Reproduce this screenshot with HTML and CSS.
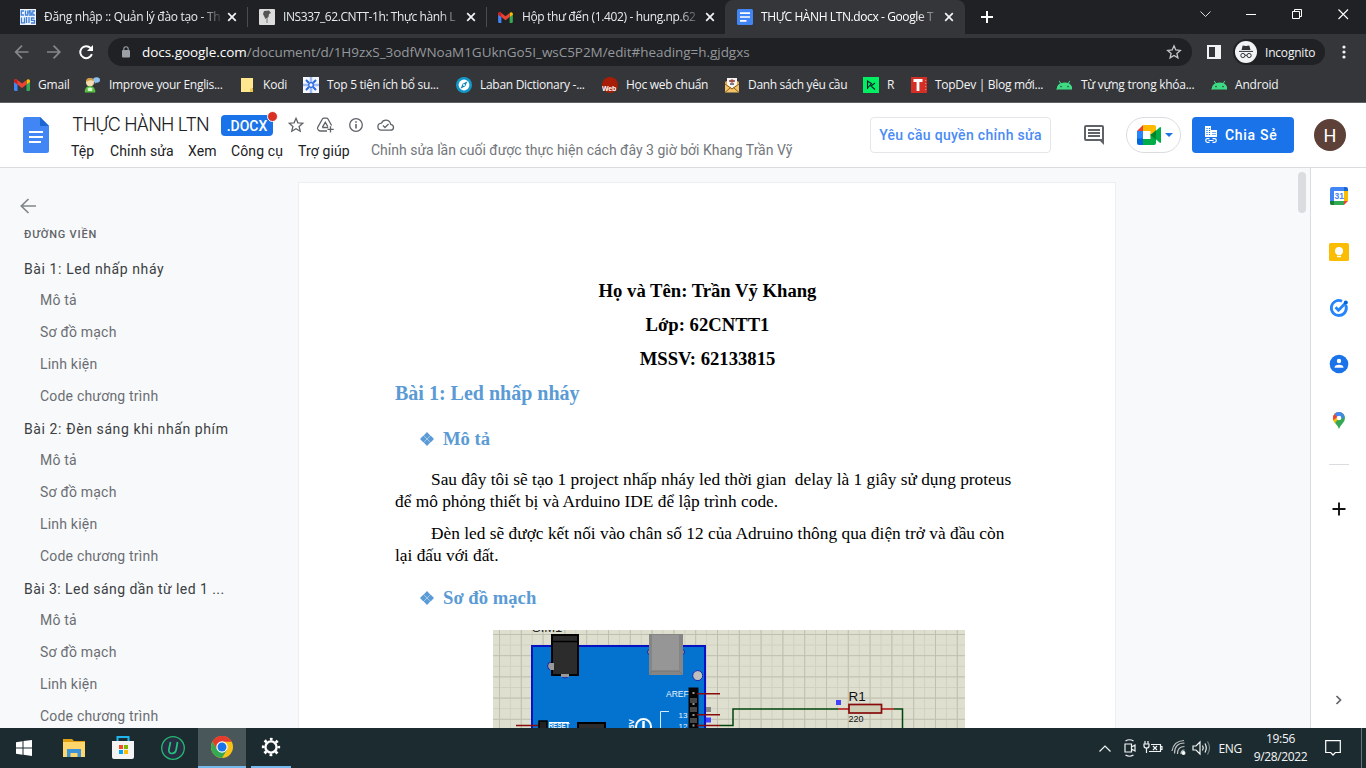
FILE: index.html
```html
<!DOCTYPE html>
<html lang="vi">
<head>
<meta charset="utf-8">
<title>THỰC HÀNH LTN.docx - Google Tài liệu</title>
<link rel="stylesheet" href="styles.css">
</head>
<body>
<svg width="0" height="0" class="defs">
  <symbol id="x" viewBox="0 0 10 10"><path d="M1.2 1.2l7.6 7.6M8.8 1.2L1.2 8.8" stroke="#f1f3f4" stroke-width="1.7"/></symbol>
  <symbol id="gmail" viewBox="0 0 16 12"><path d="M0 2v8.700Q0 12 1.200 12H3.500V5z" fill="#4285f4"/><path d="M16 2v8.700Q16 12 14.800 12H12.500V5z" fill="#34a853"/><path d="M12.500 5.500V1.200L13.300.5Q15 -.5 16 1.500V3z" fill="#fbbc04"/><path d="M0 3V1.500Q.8-.5 2.700.5L8 4.600 12.500 1.100V5.500L8 9 3.500 5.500z" fill="#ea4335"/><path d="M0 3V1.500Q.8-.5 2.700.5L3.500 1.200V5.500z" fill="#c5221f"/></symbol>
  <symbol id="android" viewBox="0 0 17 10"><path d="M1 9.500Q1.400 5.300 4.600 3.200L3.200.9M16 9.500Q15.600 5.300 12.400 3.200L13.800.9" stroke="#3ddc84" fill="none"/><path d="M.5 9.500Q1.500 2.400 8.500 2.400T16.500 9.500z" fill="#3ddc84"/><circle cx="5" cy="6.600" r=".8" fill="#35463d"/><circle cx="12" cy="6.600" r=".8" fill="#35463d"/></symbol>
  <symbol id="diamond" viewBox="0 0 14 14"><path d="M7 0l3.300 3.400L7 6.800 3.700 3.400zM3.400 3.600L6.700 7 3.400 10.400 0 7zM10.600 3.600L14 7l-3.400 3.400L7.300 7zM7 7.200l3.300 3.400L7 14l-3.300-3.400z" fill="#5b9bd5"/></symbol>
</svg>

<div class="tabstrip">
  <div class="tab">
    <svg class="fav" viewBox="0 0 16 16"><rect width="16" height="16" fill="#eef4fd"/><path d="M4 2H1.300v4H4M5.500 1.500V6H7.800V1.500M11.500 2H9.300v2h2v2H9M15 2H12.800v4H15M1.500 8.500v5.300h3V8.500M6.500 8v6M9 8v6M14.500 9h-3v2.300h3V14H11" stroke="#3f7fd8" stroke-width="1.300" fill="none"/></svg>
    <span class="tab-title t1">Đăng nhập :: Quản lý đào tạo - Th</span><svg class="close"><use href="#x"/></svg>
  </div>
  <div class="tab sep">
    <svg class="fav" viewBox="0 0 16 16"><rect width="16" height="16" rx="1" fill="#dcdcdc"/><path d="M4 5l1-3 5-.5 2 2.500-2 1-.5 3-3 2-1.500-3z" fill="#555"/><path d="M7 9l2 0v5H7z" fill="#a9a9a9"/></svg>
    <span class="tab-title t2">INS337_62.CNTT-1h: Thực hành L</span><svg class="close"><use href="#x"/></svg>
  </div>
  <div class="tab sep">
    <svg class="fav mail"><use href="#gmail"/></svg>
    <span class="tab-title t3">Hộp thư đến (1.402) - hung.np.62</span><svg class="close"><use href="#x"/></svg>
  </div>
  <div class="tab active">
    <svg class="fav" viewBox="0 0 16 16"><rect width="16" height="16" rx="1.500" fill="#4285f4"/><path d="M3 4.200h10M3 8h10M3 11.800h6.500" stroke="#fff" stroke-width="1.700"/></svg>
    <span class="tab-title t4">THỰC HÀNH LTN.docx - Google T</span><svg class="close"><use href="#x"/></svg>
  </div>
  <svg class="plus" viewBox="0 0 12 12"><path d="M6 0v12M0 6h12" stroke="#fff" stroke-width="2"/></svg>
  <svg class="winctl" viewBox="0 0 160 20">
    <path d="M5.500 7.500l5 5 5-5" fill="none" stroke="#ddd" stroke-width="1"/>
    <path d="M51 10.500h10" stroke="#fff"/>
    <path d="M97.500 7.500h7v7h-7zM99.500 7.500v-2h7v7h-2" fill="none" stroke="#fff"/>
    <path d="M143.500 5.500l9.500 9.500M153 5.500l-9.500 9.500" stroke="#fff" stroke-width="1.100"/>
  </svg>
</div>

<div class="toolbar">
  <svg class="nav" viewBox="0 0 84 20">
    <path d="M14.500 10H2M8 3.700L1.700 10l6.300 6.300" fill="none" stroke="#85878a" stroke-width="1.700"/>
    <path d="M33 10H45.500M39.500 3.700l6.300 6.300-6.300 6.300" fill="none" stroke="#85878a" stroke-width="1.700"/>
    <path d="M76.600 6A6 6 0 1 0 77.900 12.200" fill="none" stroke="#fff" stroke-width="2"/><path d="M79 3v6h-6z" fill="#fff"/>
  </svg>
  <div class="omnibox">
    <svg class="lock" viewBox="0 0 8 12"><rect y="4" width="8" height="7.500" rx="1" fill="#9aa0a6"/><path d="M1.800 4.500V3a2.200 2.200 0 0 1 4.400 0v1.500" fill="none" stroke="#9aa0a6" stroke-width="1.100"/></svg>
    <span class="url"><b>docs.google.com</b>/document/d/1H9zxS_3odfWNoaM1GUknGo5I_wsC5P2M/edit#heading=h.gjdgxs</span>
    <svg class="bstar" viewBox="0 0 16 16"><path d="M8 1.800l1.800 4.200 4.500.4-3.400 3 1 4.500L8 11.500l-3.900 2.400 1-4.500-3.400-3 4.500-.4z" fill="none" stroke="#c4c7cb" stroke-width="1.300"/></svg>
  </div>
  <svg class="side" viewBox="0 0 14 14"><path d="M0 0h14v14H0zM2 2v10h6V2z" fill="#f1f3f4" fill-rule="evenodd"/></svg>
  <div class="incog">
    <svg viewBox="0 0 22 22"><circle cx="11" cy="11" r="11" fill="#f1f3f4"/><path d="M6.500 9l1.200-4.500 3.300.6 3.300-.6L15.500 9z" fill="#303236"/><path d="M4 10.400h14" stroke="#303236"/><circle cx="7.900" cy="14.500" r="2.100" fill="none" stroke="#303236"/><circle cx="14.100" cy="14.500" r="2.100" fill="none" stroke="#303236"/><path d="M10 14.300h2" stroke="#303236"/></svg>
    <span>Incognito</span>
  </div>
  <svg class="dots" viewBox="0 0 4 14"><circle cx="2" cy="2" r="1.600" fill="#f1f3f4"/><circle cx="2" cy="7" r="1.600" fill="#f1f3f4"/><circle cx="2" cy="12" r="1.600" fill="#f1f3f4"/></svg>
</div>

<div class="bookmarks">
  <div class="bm"><svg><use href="#gmail" y="2" width="16" height="12"/></svg><span>Gmail</span></div>
  <div class="bm"><svg viewBox="0 0 16 16"><ellipse cx="12.500" cy="3" rx="3.500" ry="2.700" fill="#8cc2f2"/><path d="M11 5l-.5 2 2-1.500z" fill="#8cc2f2"/><circle cx="6" cy="5.200" r="4" fill="#f3ddb0"/><path d="M2 5Q2 .8 6 1t4 3Q6 2.500 4 4z" fill="#d09c45"/><path d="M.8 15.500Q.5 9 6 9t5.300 6.500z" fill="#59bf40"/><path d="M3.500 11.500Q6 9.500 8.500 11.500L8 14H4z" fill="#d8f5cb"/></svg><span class="b1">Improve your Englis...</span></div>
  <div class="bm"><svg viewBox="0 0 16 16"><path d="M2 1h12v10.500h-1V15H2z" fill="#ffe68f"/><path d="M11 15v-3.500h3V15z" fill="#efc84d"/></svg><span>Kodi</span></div>
  <div class="bm"><svg viewBox="0 0 16 16"><rect width="16" height="16" fill="#f4f7ff"/><path d="M8 0v6M8 10v6M0 8h6M10 8h6" stroke="#9cb9f5" stroke-width="2.500"/><path d="M3 3l3 3M13 3l-3 3M3 13l3-3M13 13l-3-3" stroke="#2869dc" stroke-width="2"/><circle cx="8" cy="8" r="2.300" fill="none" stroke="#2869dc" stroke-width="1.300"/></svg><span class="b3">Top 5 tiện ích bổ su...</span></div>
  <div class="bm"><svg viewBox="0 0 16 16"><circle cx="8" cy="8" r="8" fill="#1298c8"/><circle cx="8" cy="8" r="5.400" fill="#fff"/><path d="M11.500 4.200L9.300 9.300 4.500 11.800 6.700 6.700z" fill="#1286b5"/><circle cx="8" cy="8" r="1" fill="#fff"/></svg><span class="b4">Laban Dictionary -...</span></div>
  <div class="bm"><svg viewBox="0 0 16 16"><circle cx="8" cy="8" r="8" fill="#a71d06"/><text x="0" y="13.500" class="webico">Web</text></svg><span class="b5">Học web chuẩn</span></div>
  <div class="bm"><svg viewBox="0 0 16 16"><path d="M1 5l7-4 7 4v10H1z" fill="#e9a83f"/><path d="M3 1h10v9l-5 3-5-3z" fill="#f5f5f5"/><path d="M5 4h6M6 7h4" stroke="#555" stroke-width="1.500"/><circle cx="8" cy="4" r="1.700" fill="#b8433c"/><path d="M1 6l7 5.500L15 6v9.500H1z" fill="#f3c368"/><path d="M1 15.500l5.500-5M15 15.500l-5.500-5M1 7l7 5 7-5" stroke="#8b5d20" fill="none"/></svg><span class="b6">Danh sách yêu cầu</span></div>
  <div class="bm"><svg viewBox="0 0 16 16"><rect width="16" height="16" fill="#03ef62"/><path d="M4.500 12V4l4 2.500L4.500 11M12 6L8 9l4 3.500" stroke="#05192d" stroke-width="1.100" fill="none"/></svg><span>R</span></div>
  <div class="bm"><svg viewBox="0 0 16 16"><rect width="16" height="16" fill="#d32f24"/><path d="M2.500 3.500h9M7 3.500v10.500" stroke="#fff" stroke-width="2.800"/><path d="M14.700 3v10" stroke="#ee988f" stroke-dasharray="1 2"/></svg><span class="b8">TopDev | Blog mới...</span></div>
  <div class="bm"><svg><use href="#android" y="3" width="17" height="10"/></svg><span class="b9">Từ vựng trong khóa...</span></div>
  <div class="bm"><svg><use href="#android" y="3" width="17" height="10"/></svg><span>Android</span></div>
</div>

<header class="docs">
  <svg class="logo" viewBox="0 0 26 36"><path d="M2.500 0H17l9 9v24.500Q26 36 23.500 36h-21Q0 36 0 33.500v-31Q0 0 2.500 0z" fill="#4285f4"/><path d="M17 0l9 9h-9z" fill="#1967d2"/><path d="M6 15h14M6 20h14M6 25h12" stroke="#fff" stroke-width="2"/></svg>
  <div class="titles">
    <div class="row1">
      <span class="title">THỰC HÀNH LTN</span>
      <span class="badge">.DOCX<i></i></span>
      <svg class="ticons" viewBox="0 0 108 18">
        <g fill="none" stroke="#5f6368" stroke-width="1.300">
        <path d="M8 2.300l1.900 4.500 4.900.4-3.700 3.200 1.100 4.800L8 12.700l-4.200 2.500 1.100-4.800-3.700-3.200 4.900-.4z"/>
        <path d="M39 15h-7q-1 0-1.500-.8L29.700 13q-.5-.8 0-1.600L34.400 3q.5-.8 1.500-.8h2.600q1 0 1.500.8l3.600 6.500M42.500 10.300v6.200M39.500 13.400h6.200M34.200 11.500h6M34.300 11.300l3-5 2.500 4.200"/>
        <circle cx="68" cy="9" r="6.300"/><path d="M68 8v4.500M68 5.300v1.500" stroke-width="1.600"/>
        <path d="M94.500 14.200h8q3 0 3-2.800 0-2.500-2.800-3-.8-4.200-4.800-4.200-3.200 0-4.500 3-3.500.3-3.500 3.500t3.500 3.500zM95 9.500l2 2 3.500-3.500"/>
        </g>
      </svg>
    </div>
    <div class="row2">
      <span>Tệp</span><span>Chỉnh sửa</span><span>Xem</span><span>Công cụ</span><span>Trợ giúp</span><span class="last">Chỉnh sửa lần cuối được thực hiện cách đây 3 giờ bởi Khang Trần Vỹ</span>
    </div>
  </div>
  <div class="request"><span>Yêu cầu quyền chỉnh sửa</span></div>
  <svg class="comment" viewBox="0 0 20 20"><path d="M2 0h16q2 0 2 2v18l-4-4H2q-2 0-2-2V2Q0 0 2 0zM2 2v12h16V2z" fill="#5f6368" fill-rule="evenodd"/><path d="M4 5h12M4 8h12M4 11h12" stroke="#5f6368" stroke-width="2"/></svg>
  <div class="meet">
    <svg class="cam" viewBox="0 0 24 20"><path d="M0 6h6v8H0z" fill="#2684fc"/><path d="M6 0v6H0z" fill="#ea4335"/><path d="M0 13.500h6V20H2q-2 0-2-2z" fill="#0066da"/><path d="M6 0h11q2 0 2 2v6l-5.500 4V6H6z" fill="#ffba00"/><path d="M6 14h7.500V8.500L19 12v6q0 2-2 2H6z" fill="#00ac47"/><path d="M14 10l8.500-7.500Q24 1.500 24 3v14q0 1.500-1.500.5z" fill="#00ac47"/><path d="M13.500 10l5.500-4.700v9.400z" fill="#00832d"/></svg>
    <svg class="caret" viewBox="0 0 8 4"><path d="M0 0h8L4 4z" fill="#1a73e8"/></svg>
  </div>
  <div class="share">
    <svg viewBox="0 0 14 18"><path d="M1 0h6v4h6v7H1z" fill="#fff"/><path d="M3 2v8M5.500 2v8M9 6v4M11 6v4" stroke="#1a73e8" stroke-width="1.200" stroke-dasharray="1 1"/><path d="M5.500 12.700h-2a1.800 1.800 0 0 0 0 3.600h2M8.500 12.700h2a1.800 1.800 0 0 1 0 3.600h-2M4.500 14.500h5" stroke="#fff" stroke-width="1.200" fill="none"/></svg>
    <span>Chia Sẻ</span>
  </div>
  <div class="avatar">H</div>
</header>

<main class="workspace">
  <nav class="outline">
    <svg class="back" viewBox="0 0 16 16"><path d="M16 8H2M8.500 1L1.300 8l7.200 7" fill="none" stroke="#80868b" stroke-width="1.700"/></svg>
    <div class="caption">ĐƯỜNG VIỀN</div>
    <ul>
      <li class="h">Bài 1: Led nhấp nháy</li><li>Mô tả</li><li>Sơ đồ mạch</li><li>Linh kiện</li><li>Code chương trình</li>
      <li class="h">Bài 2: Đèn sáng khi nhấn phím</li><li>Mô tả</li><li>Sơ đồ mạch</li><li>Linh kiện</li><li>Code chương trình</li>
      <li class="h h3">Bài 3: Led sáng dần từ led 1 ...</li><li>Mô tả</li><li>Sơ đồ mạch</li><li>Linh kiện</li><li>Code chương trình</li>
    </ul>
  </nav>
  <article class="page">
    <p class="center">Họ và Tên: Trần Vỹ Khang</p>
    <p class="center">Lớp: 62CNTT1</p>
    <p class="center">MSSV: 62133815</p>
    <h1>Bài 1: Led nhấp nháy</h1>
    <h2><svg><use href="#diamond"/></svg>Mô tả</h2>
    <div class="para">
      <p class="first">Sau đây tôi sẽ tạo 1 project nhấp nháy led thời gian&nbsp; delay là 1 giây sử dụng proteus</p>
      <p>để mô phỏng thiết bị và Arduino IDE để lập trình code.</p>
    </div>
    <div class="para">
      <p class="first l3">Đèn led sẽ được kết nối vào chân số 12 của Adruino thông qua điện trở và đầu còn</p>
      <p>lại đấu với đất.</p>
    </div>
    <h2 class="second"><svg><use href="#diamond"/></svg>Sơ đồ mạch</h2>
    <svg class="circuit" viewBox="0 0 472 98">
      <defs>
        <pattern id="minor" width="10.900" height="10.600" patternUnits="userSpaceOnUse" x="6" y="4"><path d="M.5 0v10.600M0 .5h10.900" stroke="#d0d1c1" stroke-width="1"/></pattern>
        <pattern id="major" width="21.800" height="21.200" patternUnits="userSpaceOnUse" x="6" y="4"><path d="M0 .5h21.800M.5 0v21.200" stroke="#bfc0b0" stroke-width="1"/></pattern>
      </defs>
      <rect width="472" height="98" fill="#dfdfd0"/><rect width="472" height="98" fill="url(#minor)"/><rect width="472" height="98" fill="url(#major)"/>
      <text x="39" y="1.500" class="sim">SIM1</text>
      <path d="M39 120V16h173v104z" fill="#0473cf" stroke="#0a10c4" stroke-width="2"/>
      <g stroke="#1523b0" fill="#999"><circle cx="58.500" cy="36" r="4"/><circle cx="72" cy="44.500" r="3.500"/><circle cx="157" cy="22" r="2.500"/><circle cx="189" cy="22" r="2.500"/></g>
      <rect x="59" y="5" width="26" height="40" fill="#2c2c2c" stroke="#050505" stroke-width="2"/><path d="M60 11.500h25" stroke="#000" stroke-width="1.500"/>
      <path d="M57 33h4v7h-4zM68 44h8v3h-8z" fill="#999"/>
      <path d="M156 4h34v41h-34z" fill="#858585"/><path d="M159 5h27v36h-27z" fill="#969696"/><path d="M156 45l3-4h27l4 4" stroke="#777" fill="none"/>
      <circle cx="204.700" cy="45.600" r="5" fill="#bebebe" stroke="#1523b0"/>
      <rect x="195.500" y="57.500" width="10" height="41" fill="#050505"/>
      <path d="M197 68h7v5h-7zM197 77h7v5h-7zM197 88h7v5h-7z" fill="#464646"/><path d="M199.500 62h2v2h-2zM199.500 73h2v2h-2zM199.500 84h2v2h-2zM199.500 94.500h2v2h-2z" fill="#999"/>
      <path d="M204 63.700h23M204 84.800h23M204 95.500h23M23 95.500h23" stroke="#870b0b" stroke-width="1.500"/>
      <text x="173" y="66.500" class="white aref">AREF</text><text x="185.500" y="88" class="white num">13</text><text x="185.500" y="98.500" class="white num">12</text>
      <path d="M176 81.500h-8.500V98" stroke="#d6edff" fill="none"/>
      <circle cx="150.500" cy="96.500" r="7.500" fill="none" stroke="#fff" stroke-width="2"/><path d="M150.500 91v7" stroke="#fff" stroke-width="2.500"/>
      <text transform="translate(141 99) rotate(-90)" class="white fivev">5V</text>
      <rect x="46" y="91" width="8" height="9" fill="#222" stroke="#000" stroke-width="1.500"/><path d="M56 92.500h20" stroke="#fff"/><text x="55.500" y="98" class="white reset">RESET</text>
      <rect x="85" y="93" width="27" height="9" fill="#2c2c2c" stroke="#000" stroke-width="2"/>
      <rect x="213" y="77" width="5" height="5" fill="#858585"/><rect x="213" y="87.500" width="5" height="5" fill="#4242ff"/>
      <path d="M227 95.500h13V79h105M401 79h8.500v19" fill="none" stroke="#00450c" stroke-width="1.500"/>
      <path d="M345 79h11M389 79h12" stroke="#b21212" stroke-width="1.500"/>
      <rect x="356" y="74.500" width="32.500" height="8.500" fill="#ceceb7" stroke="#870b0b" stroke-width="1.700"/>
      <rect x="343" y="70" width="5" height="5" fill="#4242ff"/>
      <text x="355.500" y="70.500" class="r1">R1</text><text x="355.500" y="91.500" class="r220">220</text>
    </svg>
  </article>
  <div class="scroll"></div>
  <aside class="apps">
    <svg viewBox="0 0 20 20"><path d="M1 3q0-2 2-2h12v4H5v10H1z" fill="#4285f4"/><path d="M15 1h2q2 0 2 2v2h-4z" fill="#1967d2"/><path d="M15 5h4v10h-4z" fill="#fbbc04"/><path d="M5 15h10v4H3q-2 0-2-2v-2z" fill="#34a853"/><path d="M1 15h4v4H3q-2 0-2-2z" fill="#188038"/><path d="M15 15h4l-4 4z" fill="#ea4335"/><path d="M5 5h10v10H5z" fill="#fff"/><text x="5.600" y="13" class="cal">31</text></svg>
    <svg viewBox="0 0 20 20"><rect y="1" width="20" height="18" rx="1.500" fill="#fbbc04"/><circle cx="10" cy="9" r="4" fill="#fff"/><path d="M8 11h4v2H8zM8 13.800h4v1.500H8z" fill="#fff"/></svg>
    <svg viewBox="0 0 20 20"><path d="M16.700 7A7.500 7.500 0 1 1 13 3.200" fill="none" stroke="#2684fc" stroke-width="2.800"/><path d="M6.500 9.200l3 3L17.500 4" fill="none" stroke="#2684fc" stroke-width="2.800"/><circle cx="16.800" cy="4.400" r="2" fill="#0066da"/></svg>
    <svg viewBox="0 0 20 20"><circle cx="10" cy="10" r="9.300" fill="#1a73e8"/><circle cx="10" cy="7" r="2.200" fill="#fff"/><path d="M5.500 13.700q0-3 4.500-3t4.500 3z" fill="#fff"/></svg>
    <svg viewBox="0 0 20 20"><path d="M4 8a6 6 0 0 1 12 0q0 2.700-2.500 5.500Q11 16 10 19 9 16 6.500 13.500 4 10.700 4 8z" fill="#34a853"/><path d="M4 8q0 3 2 5l8-9.500Q12 2 10 2 4 2 4 8z" fill="#fbbc04"/><path d="M5.200 4.200L10 8l4.500-4A6 6 0 0 0 5.200 4.200z" fill="#4285f4"/><path d="M5.200 4.200L8.800 7 4.200 10Q3.500 6.500 5.200 4.200z" fill="#ea4335"/><path d="M14.500 4L10 9l5-1z" fill="#4285f4"/><circle cx="10" cy="8" r="2.300" fill="#fff"/></svg>
    <hr>
    <svg class="add" viewBox="0 0 20 20"><path d="M10 3.500v13M3.500 10h13" stroke="#111" stroke-width="1.900"/></svg>
    <svg class="chev" viewBox="0 0 20 20"><path d="M7.500 6l4 4-4 4" fill="none" stroke="#5f6368" stroke-width="1.700"/></svg>
  </aside>
</main>

<footer class="taskbar">
  <div class="tb"><svg viewBox="0 0 24 24"><path d="M4 6.300l6.500-1v6.200H4zM11.500 5.100L20 4v7.500h-8.500zM4 12.500h6.500v6.200L4 17.800zM11.500 12.500H20V20l-8.500-1.200z" fill="#fff"/></svg></div>
  <div class="tb"><svg viewBox="0 0 24 24"><path d="M1 3h9l2 2h11v16H1z" fill="#e0a012"/><path d="M1 6h22v15H1z" fill="#ffd66b"/><path d="M5 13h14v8h-3.500v-4h-7v4H5z" fill="#3d93da"/></svg></div>
  <div class="tb"><svg viewBox="0 0 24 24"><path d="M6.500 5V1h11v4" fill="none" stroke="#20b5ee" stroke-width="2"/><path d="M1 5h22v16q0 2-2 2H3q-2 0-2-2z" fill="#f4f4f4"/><path d="M8 9h4v4H8z" fill="#f25022"/><path d="M13 9h4v4h-4z" fill="#7fba00"/><path d="M8 14h4v4H8z" fill="#00a4ef"/><path d="M13 14h4v4h-4z" fill="#ffb900"/></svg></div>
  <div class="tb"><svg viewBox="0 0 24 24"><circle cx="12" cy="12" r="11.300" fill="#282e42" stroke="#24b873" stroke-width="1.300"/><path d="M9.500 6L8 13q-.8 4.500 3 4.500 3.500 0 4.300-4.500L16.500 6" fill="none" stroke="#24c47c" stroke-width="1.700"/></svg></div>
  <div class="tb on"><svg viewBox="0 0 24 24"><circle cx="12" cy="12" r="11" fill="#fbc116"/><path d="M12 12L2.500 6.500A11 11 0 0 1 21.500 6.500H12z" fill="#ea4335"/><path d="M2.500 6.500A11 11 0 0 0 12 23l5-8.200H7.300z" fill="#34a853"/><path d="M2.500 6.500A11 11 0 0 1 21.500 6.500H12a6 6 0 0 0-5 8z" fill="#e33b2e"/><circle cx="12" cy="12" r="5.700" fill="#fff"/><circle cx="12" cy="12" r="4.500" fill="#1a73e8"/></svg></div>
  <div class="tb open"><svg viewBox="0 0 24 24"><circle cx="12" cy="12" r="5.600" fill="none" stroke="#fff" stroke-width="2.400"/><circle cx="12" cy="12" r="7.800" fill="none" stroke="#fff" stroke-width="2.700" stroke-dasharray="2.700 3.426" stroke-dashoffset="1.350"/></svg></div>
  <svg class="tray" viewBox="0 0 116 24">
    <g fill="none" stroke="#f2f4f4" stroke-width="1.200">
    <path d="M1.500 15.500L7 10l5.500 5.500"/>
    <path d="M27 8h6.500v8H27zM33.500 11l3.500-2v6l-3.500-2M27.500 5q4-2.500 8 0M27.500 19q4 2.500 8 0"/>
    <path d="M53 8.500h9.500v7H51M62.500 10.500h1.500v3h-1.500M55 10l4 4M59 10l-4 4M47 5v3M50 5v3M46 8h5v2q0 2-2.500 2T46 10zM48.500 12v5"/>
    <path d="M83 18q0-4 3.500-4M79.500 18q0-7.500 7-7.500M76.500 17.500Q76.500 7 86.500 7M74 15Q75.500 5 86 4.500" stroke="#bfc5c7"/><circle cx="85.500" cy="17" r="1.400" fill="#fff"/>
    <path d="M95 10h3l4-4v12l-4-4h-3zM104.500 9.500q1.500 2.500 0 5M107 7.500q2.500 4.500 0 9"/><path d="M109.500 5.500q4 6.500 0 13" stroke="#758084"/>
    </g>
  </svg>
  <span class="lang">ENG</span>
  <div class="clock"><span>19:56</span><span>9/28/2022</span></div>
  <svg class="notif" viewBox="0 0 16 16"><path d="M.7.700h14.600v11.800h-5L8 15l-2.300-2.500h-5z" fill="none" stroke="#fff" stroke-width="1.200"/></svg>
  <i class="desk"></i>
</footer>
</body>
</html>
```
FILE: styles.css
```css
* { box-sizing: border-box; }
body { margin: 0; width: 1366px; height: 768px; overflow: hidden; display: flex; flex-direction: column; font-family: "Open Sans", "Noto Sans", sans-serif; background: #f8f9fa; }
svg { display: block; flex: none; }
.defs { position: absolute; }
p, h1, h2, ul { margin: 0; padding: 0; }

.tabstrip { height: 34px; flex: none; background: #202124; display: flex; align-items: center; padding-left: 8px; }
.tab { width: 239px; height: 34px; display: flex; align-items: center; padding-left: 12px; color: #e8eaed; }
.tab.sep { background: linear-gradient(#4a4c50, #4a4c50) 0 50% / 1px 20px no-repeat; }
.tab.active { width: 240px; background: #35363a; border-radius: 8px 8px 0 0; color: #fff; }
.fav { width: 16px; height: 16px; }
.fav.mail { width: 15px; height: 11px; margin-right: 1px; }
.tab-title { width: 178px; margin-left: 8px; font-size: 12px; line-height: 18px; white-space: nowrap; -webkit-mask-image: linear-gradient(90deg, #000 88%, transparent 101%); }
.t1 { letter-spacing: -.3px; }
.t2 { letter-spacing: -.42px; }
.t3 { letter-spacing: -.36px; }
.t4 { letter-spacing: -.4px; }
.close { width: 10px; height: 10px; margin-left: 5px; }
.plus { width: 12px; height: 12px; margin-left: 16px; }
.winctl { width: 160px; height: 20px; margin-left: 202px; margin-top: -6px; }

.toolbar { height: 34px; flex: none; background: #35363a; display: flex; align-items: center; padding: 2px 0 0 14px; }
.nav { width: 84px; height: 20px; }
.omnibox { width: 1084px; height: 28px; margin-left: 10px; background: #202124; border-radius: 14px; display: flex; align-items: center; padding-left: 14px; }
.lock { width: 8px; height: 12px; }
.url { margin-left: 12px; width: 1024px; font-size: 13.500px; line-height: 20px; color: #94989d; white-space: nowrap; letter-spacing: -.04px; }
.url b { font-weight: 400; color: #fff; }
.bstar { width: 16px; height: 16px; }
.side { width: 14px; height: 14px; margin-left: 15px; }
.incog { width: 92px; height: 26px; margin-left: 12px; background: #202124; border-radius: 13px; display: flex; align-items: center; padding-left: 2px; color: #f1f3f4; font-size: 12px; letter-spacing: -.2px; }
.incog svg { width: 22px; height: 22px; margin-right: 8px; }
.dots { width: 4px; height: 14px; margin-left: 17px; }

.bookmarks { height: 35px; flex: none; background: #35363a; border-bottom: 1px solid #606165; display: grid; grid-template-columns: 70px 155px 64px 153px 146px 122px 139px 48px 145px 155px 100px; padding: 0 0 1px 14px; align-items: center; }
.bm { display: flex; align-items: center; gap: 8px; color: #f1f3f4; font-size: 12px; line-height: 18px; white-space: nowrap; letter-spacing: -.2px; }
.bm svg { width: 16px; height: 16px; }
.b1 { margin-left: 1px; letter-spacing: -.3px; }
.b3, .b4, .b5, .b8 { letter-spacing: -.29px; }
.b6 { letter-spacing: -.33px; }
.b9 { margin-left: 1px; letter-spacing: -.27px; }
.webico { font: bold 7px "Liberation Sans", sans-serif; fill: #fff; }

.docs { height: 65px; flex: none; background: #fff; border-bottom: 1px solid #dadce0; display: flex; padding-left: 23px; align-items: flex-start; }
.logo { width: 26px; height: 36px; margin-top: 14px; }
.titles { width: 798px; margin-left: 22px; padding-top: 8px; }
.row1 { height: 28px; display: flex; align-items: center; }
.title { width: 150px; padding-left: 1px; font: 300 18px/26px Inter, Roboto, sans-serif; color: #202124; white-space: nowrap; letter-spacing: -.8px; }
.badge { position: relative; width: 52px; height: 21px; background: #1a73e8; border-radius: 4px; color: #fff; font: 500 14px/22px Roboto, sans-serif; text-align: center; }
.badge i { position: absolute; right: -4px; top: -3px; width: 9px; height: 9px; border: 1px solid #fff; border-radius: 50%; background: #d93025; box-sizing: content-box; margin: -1px; }
.ticons { width: 108px; height: 18px; margin-left: 15px; }
.row2 { display: grid; grid-template-columns: 39px 78px 43px 67px 73px 440px; font: 14px/20px Roboto, sans-serif; color: #202124; padding-top: 2px; white-space: nowrap; letter-spacing: .12px; }
.row2 .last { color: #73777b; letter-spacing: 0; margin-top: -1px; }
.request { width: 181px; height: 36px; margin-top: 14px; margin-left: 1px; border: 1px solid #e4e6e9; border-radius: 4px; color: #4a8bf4; font: 500 14px/35px Roboto, sans-serif; text-align: center; white-space: nowrap; letter-spacing: .32px; }
.comment { width: 20px; height: 20px; margin: 22px 0 0 33px; }
.meet { width: 55px; height: 36px; margin: 14px 0 0 22px; border: 1px solid #dadce0; border-radius: 18px; display: flex; align-items: center; padding-left: 10px; }
.cam { width: 24px; height: 20px; }
.caret { width: 8px; height: 4px; margin-left: 4px; }
.share { width: 102px; height: 36px; margin: 14px 0 0 11px; background: #1a73e8; border-radius: 4px; display: flex; align-items: center; padding-left: 12px; color: #fff; font: 500 14px/36px Roboto, sans-serif; letter-spacing: .7px; white-space: nowrap; }
.share svg { width: 14px; height: 18px; margin-right: 7px; }
.avatar { width: 32px; height: 32px; margin: 16px 0 0 20px; border-radius: 50%; background: #5d4037; color: #fff; font: 400 18px/33px Roboto, sans-serif; text-align: center; }

.workspace { height: 560px; flex: none; display: flex; overflow: hidden; background: #f8f9fa; }
.outline { width: 298px; padding: 30px 0 0 20px; font-family: Roboto, sans-serif; }
.back { width: 16px; height: 16px; }
.caption { margin: 13px 0 0 4px; font-weight: 500; font-size: 11px; line-height: 16px; color: #5f6368; letter-spacing: .8px; }
.outline ul { list-style: none; margin-top: 10px; }
.outline li { height: 32px; line-height: 31px; padding-left: 20px; font-size: 14px; color: #6a6e73; letter-spacing: .2px; white-space: nowrap; }
.outline li.h { padding-left: 4px; line-height: 32px; color: #3c4043; letter-spacing: .6px; }
.outline li.h3 { letter-spacing: .45px; }

.page { width: 818px; height: 560px; margin-top: 14px; padding: 91px 95px 0 96px; background: #fff; border: 1px solid #eceef0; font-family: "Liberation Serif", serif; color: #000; }
.center { text-align: center; font-weight: 700; font-size: 18.670px; line-height: 34px; }
.page h1 { font-size: 20px; line-height: 35px; color: #5b9bd5; }
.page h2 { display: flex; align-items: center; font-size: 18.670px; line-height: 28px; margin-top: 14px; padding-left: 25px; color: #5b9bd5; height: 28px; }
.page h2 svg { width: 14px; height: 14px; margin-right: 9px; }
.page h2.second { margin-top: 0; }
.para { font-size: 17.330px; line-height: 22px; white-space: nowrap; height: 44px; margin-top: 16px; }
.para + .para { margin-top: 10px; margin-bottom: 17px; }
.first { padding-left: 36px; }
.l3 { letter-spacing: .012px; }
.circuit { width: 472px; height: 98px; margin: 18px 0 0 98px; }
.circuit text, .cal { font-family: "Liberation Sans", sans-serif; }
.sim { font-size: 13px; fill: #222; }
.white { fill: #eaf5ff; }
.aref { font-size: 8.500px; }
.num { font-size: 8px; }
.fivev { font-size: 8px; font-weight: 700; }
.reset { font-size: 6.300px; font-weight: 700; }
.r1 { font-size: 13.500px; fill: #111; }
.r220 { font-size: 9px; fill: #111; }
.cal { font-size: 8.500px; fill: #4285f4; font-weight: 700; }
.scroll { width: 8px; height: 41px; margin: 4px 0 0 182px; border-radius: 4px; background: #dadce0; }
.apps { width: 56px; margin-left: 4px; background: #fff; border-left: 1px solid #dadce0; display: flex; flex-direction: column; align-items: center; gap: 36px; padding-top: 18px; }
.apps svg { width: 20px; height: 20px; }
.apps hr { width: 20px; height: 1px; border: 0; background: #dadce0; margin: -2px 0 -2px; flex: none; }
.apps .chev { margin-top: 135px; }

.taskbar { height: 40px; flex: none; background: #1c2b30; display: flex; align-items: center; color: #f5f7f7; font-size: 12px; }
.tb { width: 49px; height: 40px; display: flex; align-items: center; justify-content: center; margin-right: .5px; padding-right: 1px; }
.tb svg { width: 24px; height: 24px; }
.tb.on { width: 48px; background: #49575a; border-bottom: 2px solid #76b9ed; margin-right: 5px; padding: 0; }
.tb.open { width: 40px; border-bottom: 2px solid #76b9ed; }
.tray { width: 116px; height: 24px; margin-left: 806px; }
.lang { width: 30px; margin-left: 5px; letter-spacing: -.3px; }
.clock { width: 68px; display: flex; flex-direction: column; text-align: center; line-height: 18px; letter-spacing: -.35px; margin-left: -2px; }
.notif { width: 16px; height: 16px; margin-left: 10px; }
.desk { width: 1px; height: 40px; margin-left: auto; margin-right: 4px; background: #65747a; }
```
